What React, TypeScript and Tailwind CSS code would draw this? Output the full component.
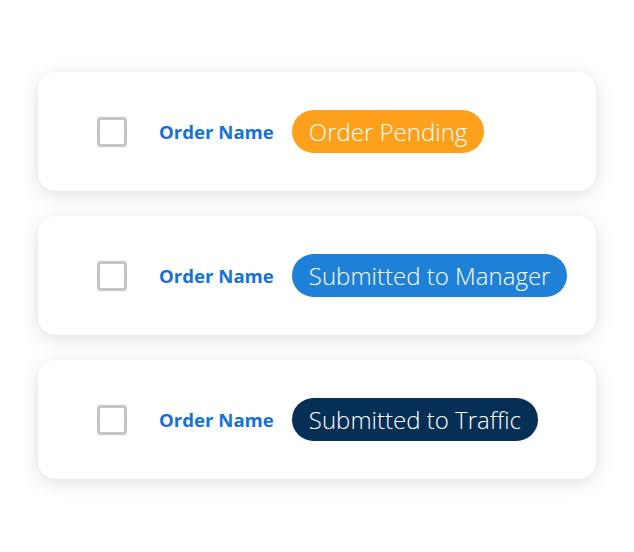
const ORDERS = [
  { label: "Order Pending", badge: "bg-[#fda11c]" },
  { label: "Submitted to Manager", badge: "bg-[#1f80d8]" },
  { label: "Submitted to Traffic", badge: "bg-[#052f55]" },
];

function OrderRow({ label, badge }: { label: string; badge: string }) {
  return (
    <div className="flex h-[119px] w-[558px] items-center rounded-[18px] bg-white pl-[59px] shadow-[0_4px_18px_rgba(0,0,0,0.13)]">
      <div className="h-[30px] w-[30px] shrink-0 rounded-[4px] border-[3px] border-[#c4c4c4]" />
      <span className="ml-[32px] text-[18.6px] font-bold text-[#1670d8]">Order Name</span>
      <span
        className={`ml-[18px] flex h-[43px] items-center rounded-full px-[17px] text-[24px] font-light text-white ${badge}`}
      >
        {label}
      </span>
    </div>
  );
}

export default function App() {
  return (
    <div className="flex min-h-[552px] w-[634px] flex-col gap-[25px] bg-white pl-[38px] pt-[72px] font-['Open_Sans',sans-serif]">
      {ORDERS.map((o) => (
        <OrderRow key={o.label} label={o.label} badge={o.badge} />
      ))}
    </div>
  );
}
